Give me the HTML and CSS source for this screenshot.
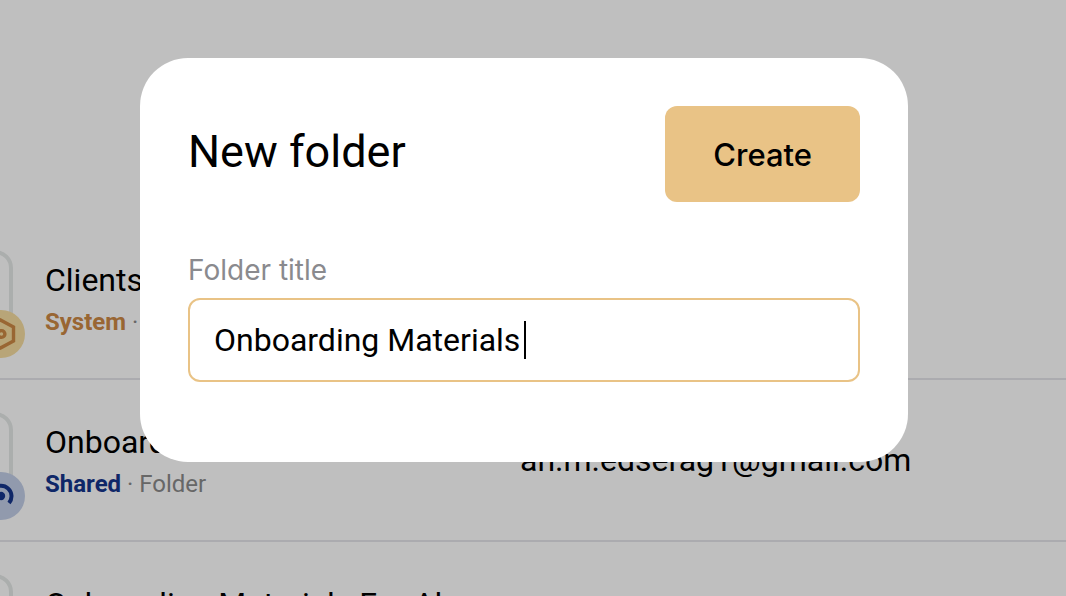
FILE: index.html
```html
<!DOCTYPE html>
<html lang="en">
<head>
    <meta charset="UTF-8">
    <meta name="viewport" content="width=device-width, initial-scale=1">
    <title>New folder</title>
    <link rel="stylesheet" href="styles.css">
</head>
<body>
<ul class="files">
    <li class="row">
        <div class="thumb">
            <span class="badge system">
                <svg width="48" height="48" viewBox="0 0 48 48" fill="none" stroke="currentColor">
                    <path d="M23.5 10L36.5 17V31L23.5 38L10.5 31V17Z" stroke-width="3.4"/>
                    <circle cx="24.5" cy="24" r="3.4" stroke-width="3.4"/>
                </svg>
            </span>
        </div>
        <div class="info">
            <h2>Clients</h2>
            <p><b class="system-text">System</b> · Folder</p>
        </div>
    </li>
    <li class="row">
        <div class="thumb">
            <span class="badge shared">
                <svg width="48" height="48" viewBox="0 0 48 48" fill="none" stroke="currentColor">
                    <path d="M16 31A10.5 10.5 0 1 1 32 31" stroke-width="4"/>
                    <circle cx="24" cy="24" r="4.2" fill="currentColor" stroke="none"/>
                </svg>
            </span>
        </div>
        <div class="info">
            <h2>Onboarding</h2>
            <p><b class="shared-text">Shared</b> · Folder</p>
        </div>
        <span class="owner">ah.m.edserag1@gmail.com</span>
    </li>
    <li class="row">
        <div class="thumb"></div>
        <div class="info">
            <h2>Onboarding Materials For Al</h2>
            <p><b class="shared-text">Shared</b> · Folder</p>
        </div>
    </li>
</ul>

<div class="overlay">
    <form class="modal" role="dialog" aria-labelledby="modal-title">
        <div class="modal-head">
            <h1 id="modal-title">New folder</h1>
            <button type="button" class="create">Create</button>
        </div>
        <label for="folder-title">Folder title</label>
        <div class="field">
            <input type="text" id="folder-title" value="Onboarding Materials" autocomplete="off" spellcheck="false">
            <span class="caret"></span>
        </div>
    </form>
</div>
</body>
</html>
```

FILE: styles.css
```css
*{
    margin:0;
    padding:0;
    box-sizing:border-box;
}
body{
    height:100vh;
    overflow:hidden;
    background-color:#fff;
    color:#000;
    font-family:Roboto,sans-serif;
}

/* file list, scrolled a little to the left */
.files{
    margin-left:-67px;
    padding-top:218px;
    list-style-type:none;
}
.row{
    display:grid;
    grid-template-columns:80px 443px 1fr;
    column-gap:32px;
    align-items:center;
    padding:32px 0;
    border-bottom:2px solid #e4e4ea;
}
.thumb{
    position:relative;
    height:96px;
    border:4px solid #e5e8e7;
    border-radius:18px;
}
.badge{
    position:absolute;
    right:-16px;
    bottom:-16px;
    width:48px;
    height:48px;
    border-radius:50%;
}
.badge svg{
    display:block;
}
.system{
    color:#cc8844;
    background-color:#f6dda0;
}
.shared{
    color:#15358b;
    background-color:#c2cee7;
}
.info{
    padding-top:4px;
    white-space:nowrap;
}
.info h2{
    font-size:32px;
    font-weight:400;
    line-height:44px;
}
.info p{
    color:#8a8a8a;
    font-size:24px;
    line-height:40px;
}
.system-text{
    color:#cc8844;
}
.shared-text{
    color:#15358b;
}
.owner{
    font-size:32px;
    line-height:40px;
}

/* dialog */
.overlay{
    position:fixed;
    top:0;
    right:0;
    bottom:0;
    left:0;
    display:flex;
    justify-content:center;
    align-items:flex-start;
    padding:58px 18px 0 0;
    background-color:rgba(0,0,0,.25);
}
.modal{
    width:100%;
    max-width:768px;
    padding:48px 48px 80px;
    border-radius:48px;
    background-color:#fff;
}
.modal-head{
    display:flex;
    justify-content:space-between;
    align-items:center;
    margin-bottom:48px;
}
.modal h1{
    padding-bottom:4px;
    font-size:45px;
    font-weight:400;
    line-height:56px;
}
.create{
    height:96px;
    padding:0 48px;
    border:0;
    border-radius:12px;
    background-color:#e9c386;
    color:#000;
    font-family:Inter,sans-serif;
    font-size:31px;
    font-weight:500;
    cursor:pointer;
}
.modal label{
    display:block;
    margin-bottom:8px;
    color:#8a8a8e;
    font-family:Inter,sans-serif;
    font-size:28px;
    line-height:40px;
}
.field{
    position:relative;
}
.field input{
    display:block;
    width:100%;
    height:84px;
    padding:0 24px;
    border:2px solid #e9c386;
    border-radius:12px;
    outline:none;
    background-color:#fff;
    color:#000;
    font-family:inherit;
    font-size:32px;
}
.caret{
    position:absolute;
    top:23px;
    left:336px;
    width:2px;
    height:38px;
    background-color:#000;
}
```
